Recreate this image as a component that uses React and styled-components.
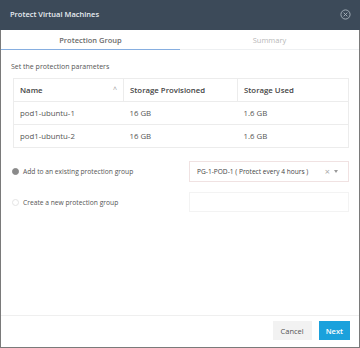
import styled, { createGlobalStyle } from "styled-components";

const Global = createGlobalStyle`
  html, body { margin: 0; padding: 0; background: #fff; }
  body { font-family: "Open Sans", "Liberation Sans", sans-serif; }
`;

const rows = [
  { name: "pod1-ubuntu-1", prov: "16 GB", used: "1.6 GB" },
  { name: "pod1-ubuntu-2", prov: "16 GB", used: "1.6 GB" },
];

const App = () => {
  return (
    <>
      <Global />
      <Dialog>
        <Header>
          <Title>Protect Virtual Machines</Title>
          <CloseIcon />
        </Header>
        <Tabs>
          <Tab active>Protection Group</Tab>
          <Tab>Summary</Tab>
        </Tabs>
        <Body>
          <Hint>Set the protection parameters</Hint>
          <Table>
            <colgroup>
              <col style={{ width: 110 }} />
              <col style={{ width: 114 }} />
              <col style={{ width: 111 }} />
            </colgroup>
            <thead>
              <tr>
                <Th>
                  <SortHead>
                    Name <Caret>^</Caret>
                  </SortHead>
                </Th>
                <Th>Storage Provisioned</Th>
                <Th>Storage Used</Th>
              </tr>
            </thead>
            <tbody>
              {rows.map((r) => (
                <tr key={r.name}>
                  <Td>{r.name}</Td>
                  <Td>{r.prov}</Td>
                  <Td>{r.used}</Td>
                </tr>
              ))}
            </tbody>
          </Table>
          <Options>
            <Radio checked />
            <OptionLabel>Add to an existing protection group</OptionLabel>
            <Select>
              <span>PG-1-POD-1 ( Protect every 4 hours )</span>
              <SelectIcons>
                <span>×</span>
                <Arrow />
              </SelectIcons>
            </Select>
            <Radio />
            <OptionLabel>Create a new protection group</OptionLabel>
            <Input />
          </Options>
        </Body>
        <Footer>
          <Button>Cancel</Button>
          <Button primary>Next</Button>
        </Footer>
      </Dialog>
    </>
  );
};

const CloseIcon = () => (
  <svg width="11" height="11" viewBox="0 0 12 12">
    <circle cx="6" cy="6" r="5" fill="none" stroke="#a9b3bd" strokeWidth="1" />
    <path d="M4 4 L8 8 M8 4 L4 8" stroke="#a9b3bd" strokeWidth="1" />
  </svg>
);

export default App;

const Dialog = styled.div`
  width: 360px;
  height: 348px;
  box-sizing: border-box;
  border: 1px solid #7a7a7a;
  border-top: none;
  display: flex;
  flex-direction: column;
  background: #fff;
`;

const Header = styled.div`
  height: 30px;
  background: #3c4a59;
  margin: 0 -1px;
  display: flex;
  align-items: center;
  justify-content: space-between;
  padding: 0 9px 2px 10px;
  box-sizing: border-box;
  flex-shrink: 0;
`;

const Title = styled.div`
  color: #e8edf2;
  font-size: 7.5px;
  font-weight: 600;
`;

const Tabs = styled.div`
  display: flex;
  height: 20px;
  flex-shrink: 0;
`;

const Tab = styled.div`
  flex: 1;
  display: flex;
  align-items: center;
  justify-content: center;
  font-size: 7.5px;
  font-weight: ${(p) => (p.active ? 600 : 400)};
  color: ${(p) => (p.active ? "#6b6b6b" : "#b8b8b8")};
  border-bottom: 1.5px solid ${(p) => (p.active ? "#86aee0" : "#eef0f2")};
`;

const Body = styled.div`
  flex: 1;
  padding: 12px 10px 0 10px;
`;

const Hint = styled.div`
  font-size: 7px;
  color: #555;
  margin-bottom: 7px;
`;

const Table = styled.table`
  width: 335px;
  margin-left: 2px;
  table-layout: fixed;
  border-collapse: collapse;
  border: 1px solid #ececec;
  font-size: 7.8px;
`;

const Th = styled.th`
  text-align: left;
  font-weight: 600;
  color: #444;
  height: 22px;
  padding: 0 6px;
  border: 1px solid #ececec;
`;

const SortHead = styled.div`
  display: flex;
  justify-content: space-between;
`;

const Caret = styled.span`
  color: #999;
  font-weight: 400;
  font-size: 7px;
`;

const Td = styled.td`
  color: #555;
  height: 22px;
  padding: 0 6px;
  border-top: 1px solid #ececec;
`;

const Options = styled.div`
  display: grid;
  grid-template-columns: 5px 159px 1fr;
  column-gap: 7px;
  row-gap: 10px;
  align-items: center;
  margin-top: 13px;
  font-size: 6.7px;
  color: #555;
`;

const Radio = styled.span`
  width: 5px;
  height: 5px;
  margin-left: 1px;
  border-radius: 50%;
  border: 1px solid ${(p) => (p.checked ? "#8a8a8a" : "#e4e4e4")};
  background: ${(p) => (p.checked ? "#8a8a8a" : "#fff")};
`;

const OptionLabel = styled.span``;

const Select = styled.div`
  height: 21px;
  box-sizing: border-box;
  border: 1px solid #f0e2e2;
  display: flex;
  align-items: center;
  justify-content: space-between;
  padding: 0 10px 0 7px;
  color: #444;
  font-size: 6.6px;
`;

const SelectIcons = styled.span`
  display: flex;
  align-items: center;
  gap: 4px;
  color: #aaa;
  font-size: 9px;
`;

const Arrow = styled.span`
  width: 0;
  height: 0;
  border-left: 2.5px solid transparent;
  border-right: 2.5px solid transparent;
  border-top: 3px solid #999;
`;

const Input = styled.div`
  height: 20px;
  box-sizing: border-box;
  border: 1px solid #f3f3f3;
`;

const Footer = styled.div`
  height: 29px;
  border-top: 1px solid #efefef;
  display: flex;
  align-items: center;
  justify-content: flex-end;
  gap: 7px;
  padding: 0 9px 2px;
  flex-shrink: 0;
`;

const Button = styled.button`
  font-family: inherit;
  font-size: 7.5px;
  font-weight: ${(p) => (p.primary ? 600 : 400)};
  height: 19px;
  padding: 0 ${(p) => (p.primary ? 7 : 8)}px;
  border: none;
  background: ${(p) => (p.primary ? "#1ba1dc" : "#f2f2f2")};
  color: ${(p) => (p.primary ? "#fff" : "#555")};
`;
